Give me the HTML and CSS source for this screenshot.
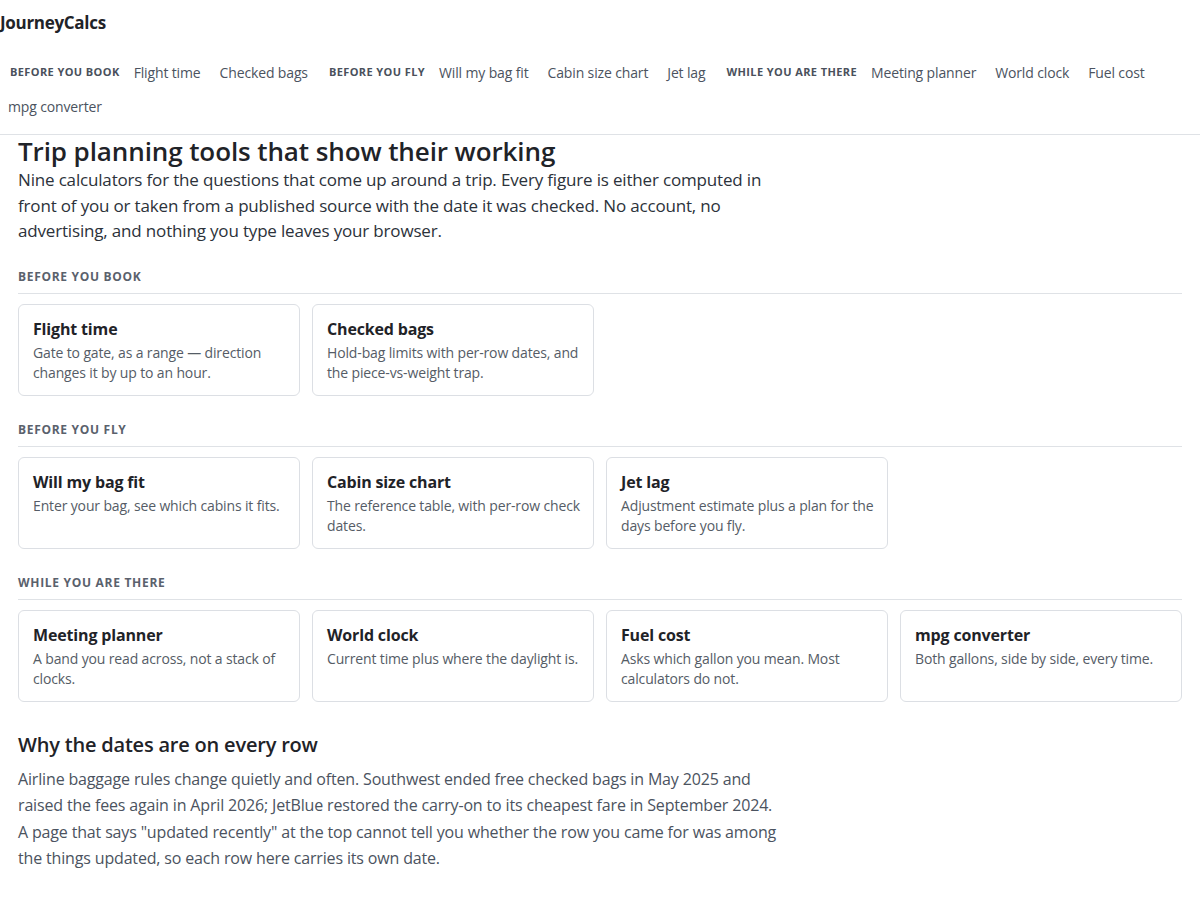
FILE: index.html
```html
<!DOCTYPE html>
<html lang="en">
<head>
<meta charset="utf-8">
<title>JourneyCalcs</title>
<link rel="stylesheet" href="styles.css">
</head>
<body>
<header class="site-header">
  <div class="brand">JourneyCalcs</div>
  <nav class="nav">
    <span class="nav-label">Before you book</span>
    <a class="nav-link" href="#">Flight time</a>
    <a class="nav-link" href="#">Checked bags</a>
    <span class="nav-label">Before you fly</span>
    <a class="nav-link" href="#">Will my bag fit</a>
    <a class="nav-link" href="#">Cabin size chart</a>
    <a class="nav-link" href="#">Jet lag</a>
    <span class="nav-label">While you are there</span>
    <a class="nav-link" href="#">Meeting planner</a>
    <a class="nav-link" href="#">World clock</a>
    <a class="nav-link" href="#">Fuel cost</a>
    <a class="nav-link" href="#">mpg converter</a>
  </nav>
</header>
<main class="main">
  <h1 class="title">Trip planning tools that show their working</h1>
  <p class="lead">Nine calculators for the questions that come up around a trip. Every figure is either computed in front of you or taken from a published source with the date it was checked. No account, no advertising, and nothing you type leaves your browser.</p>

  <section class="group">
    <h2 class="group-label">Before you book</h2>
    <div class="cards">
      <a class="card" href="#"><span class="card-title">Flight time</span><span class="card-desc">Gate to gate, as a range — direction changes it by up to an hour.</span></a>
      <a class="card" href="#"><span class="card-title">Checked bags</span><span class="card-desc">Hold-bag limits with per-row dates, and the piece-vs-weight trap.</span></a>
    </div>
  </section>

  <section class="group">
    <h2 class="group-label">Before you fly</h2>
    <div class="cards">
      <a class="card" href="#"><span class="card-title">Will my bag fit</span><span class="card-desc">Enter your bag, see which cabins it fits.</span></a>
      <a class="card" href="#"><span class="card-title">Cabin size chart</span><span class="card-desc">The reference table, with per-row check dates.</span></a>
      <a class="card" href="#"><span class="card-title">Jet lag</span><span class="card-desc">Adjustment estimate plus a plan for the days before you fly.</span></a>
    </div>
  </section>

  <section class="group">
    <h2 class="group-label">While you are there</h2>
    <div class="cards">
      <a class="card" href="#"><span class="card-title">Meeting planner</span><span class="card-desc">A band you read across, not a stack of clocks.</span></a>
      <a class="card" href="#"><span class="card-title">World clock</span><span class="card-desc">Current time plus where the daylight is.</span></a>
      <a class="card" href="#"><span class="card-title">Fuel cost</span><span class="card-desc">Asks which gallon you mean. Most calculators do not.</span></a>
      <a class="card" href="#"><span class="card-title">mpg converter</span><span class="card-desc">Both gallons, side by side, every time.</span></a>
    </div>
  </section>

  <section class="why">
    <h2 class="why-title">Why the dates are on every row</h2>
    <p class="why-text">Airline baggage rules change quietly and often. Southwest ended free checked bags in May 2025 and raised the fees again in April 2026; JetBlue restored the carry-on to its cheapest fare in September 2024. A page that says "updated recently" at the top cannot tell you whether the row you came for was among the things updated, so each row here carries its own date.</p>
  </section>
</main>
</body>
</html>
```

FILE: styles.css
```css
* { box-sizing: border-box; }

html, body {
  margin: 0;
  padding: 0;
  background: #ffffff;
}

body {
  font-family: "Open Sans", "Noto Sans", "DejaVu Sans", sans-serif;
  color: #1f2328;
}

.site-header {
  border-bottom: 1px solid #dfe2e6;
  padding: 11px 0 10px 0;
}

.brand {
  font-size: 17px;
  font-weight: 700;
  line-height: 24px;
  color: #1f2328;
  letter-spacing: -0.3px;
  margin-bottom: 21px;
}

.nav {
  display: flex;
  flex-wrap: wrap;
  align-items: center;
  gap: 0 3px;
}

.nav-label {
  font-size: 11px;
  font-weight: 700;
  text-transform: uppercase;
  letter-spacing: 0.4px;
  color: #4a515c;
  padding: 0 3px 0 10px;
  line-height: 34px;
  position: relative;
  top: -1px;
}

.nav-link {
  font-size: 14px;
  line-height: 20px;
  padding: 7px 8px;
  letter-spacing: -0.01em;
  color: #4b5360;
  text-decoration: none;
}

.main {
  padding: 0 18px 40px 18px;
}

.title {
  font-size: 26px;
  font-weight: 600;
  line-height: 32px;
  letter-spacing: -0.1px;
  margin: 0;
  color: #1f2328;
}

.lead {
  font-size: 17px;
  line-height: 25.5px;
  letter-spacing: -0.01em;
  margin: 0;
  max-width: 760px;
  color: #2c323a;
}

.group {
  margin-top: 25px;
}

.group + .group {
  margin-top: 26px;
}

.group-label {
  font-size: 12px;
  font-weight: 700;
  text-transform: uppercase;
  letter-spacing: 0.7px;
  line-height: 16px;
  color: #5a616c;
  margin: 0;
  padding-bottom: 8px;
  border-bottom: 1px solid #dfe2e6;
}

.cards {
  display: grid;
  grid-template-columns: repeat(4, 1fr);
  gap: 12px;
  margin-top: 10px;
}

.card {
  display: flex;
  flex-direction: column;
  border: 1px solid #dcdfe4;
  border-radius: 6px;
  padding: 13px 10px 12px 14px;
  text-decoration: none;
  min-height: 92px;
}

.card-title {
  font-size: 16px;
  font-weight: 700;
  line-height: 22px;
  letter-spacing: -0.01em;
  color: #1f2328;
  margin-bottom: 3px;
}

.card-desc {
  font-size: 14px;
  line-height: 20px;
  letter-spacing: -0.01em;
  color: #555c66;
}

.why {
  margin-top: 29px;
}

.why-title {
  font-size: 20px;
  font-weight: 600;
  line-height: 28px;
  letter-spacing: -0.01em;
  margin: 0 0 7px 0;
  color: #1f2328;
}

.why-text {
  font-size: 16px;
  line-height: 26.6px;
  letter-spacing: -0.01em;
  margin: 0;
  max-width: 760px;
  color: #4b5360;
}
```
